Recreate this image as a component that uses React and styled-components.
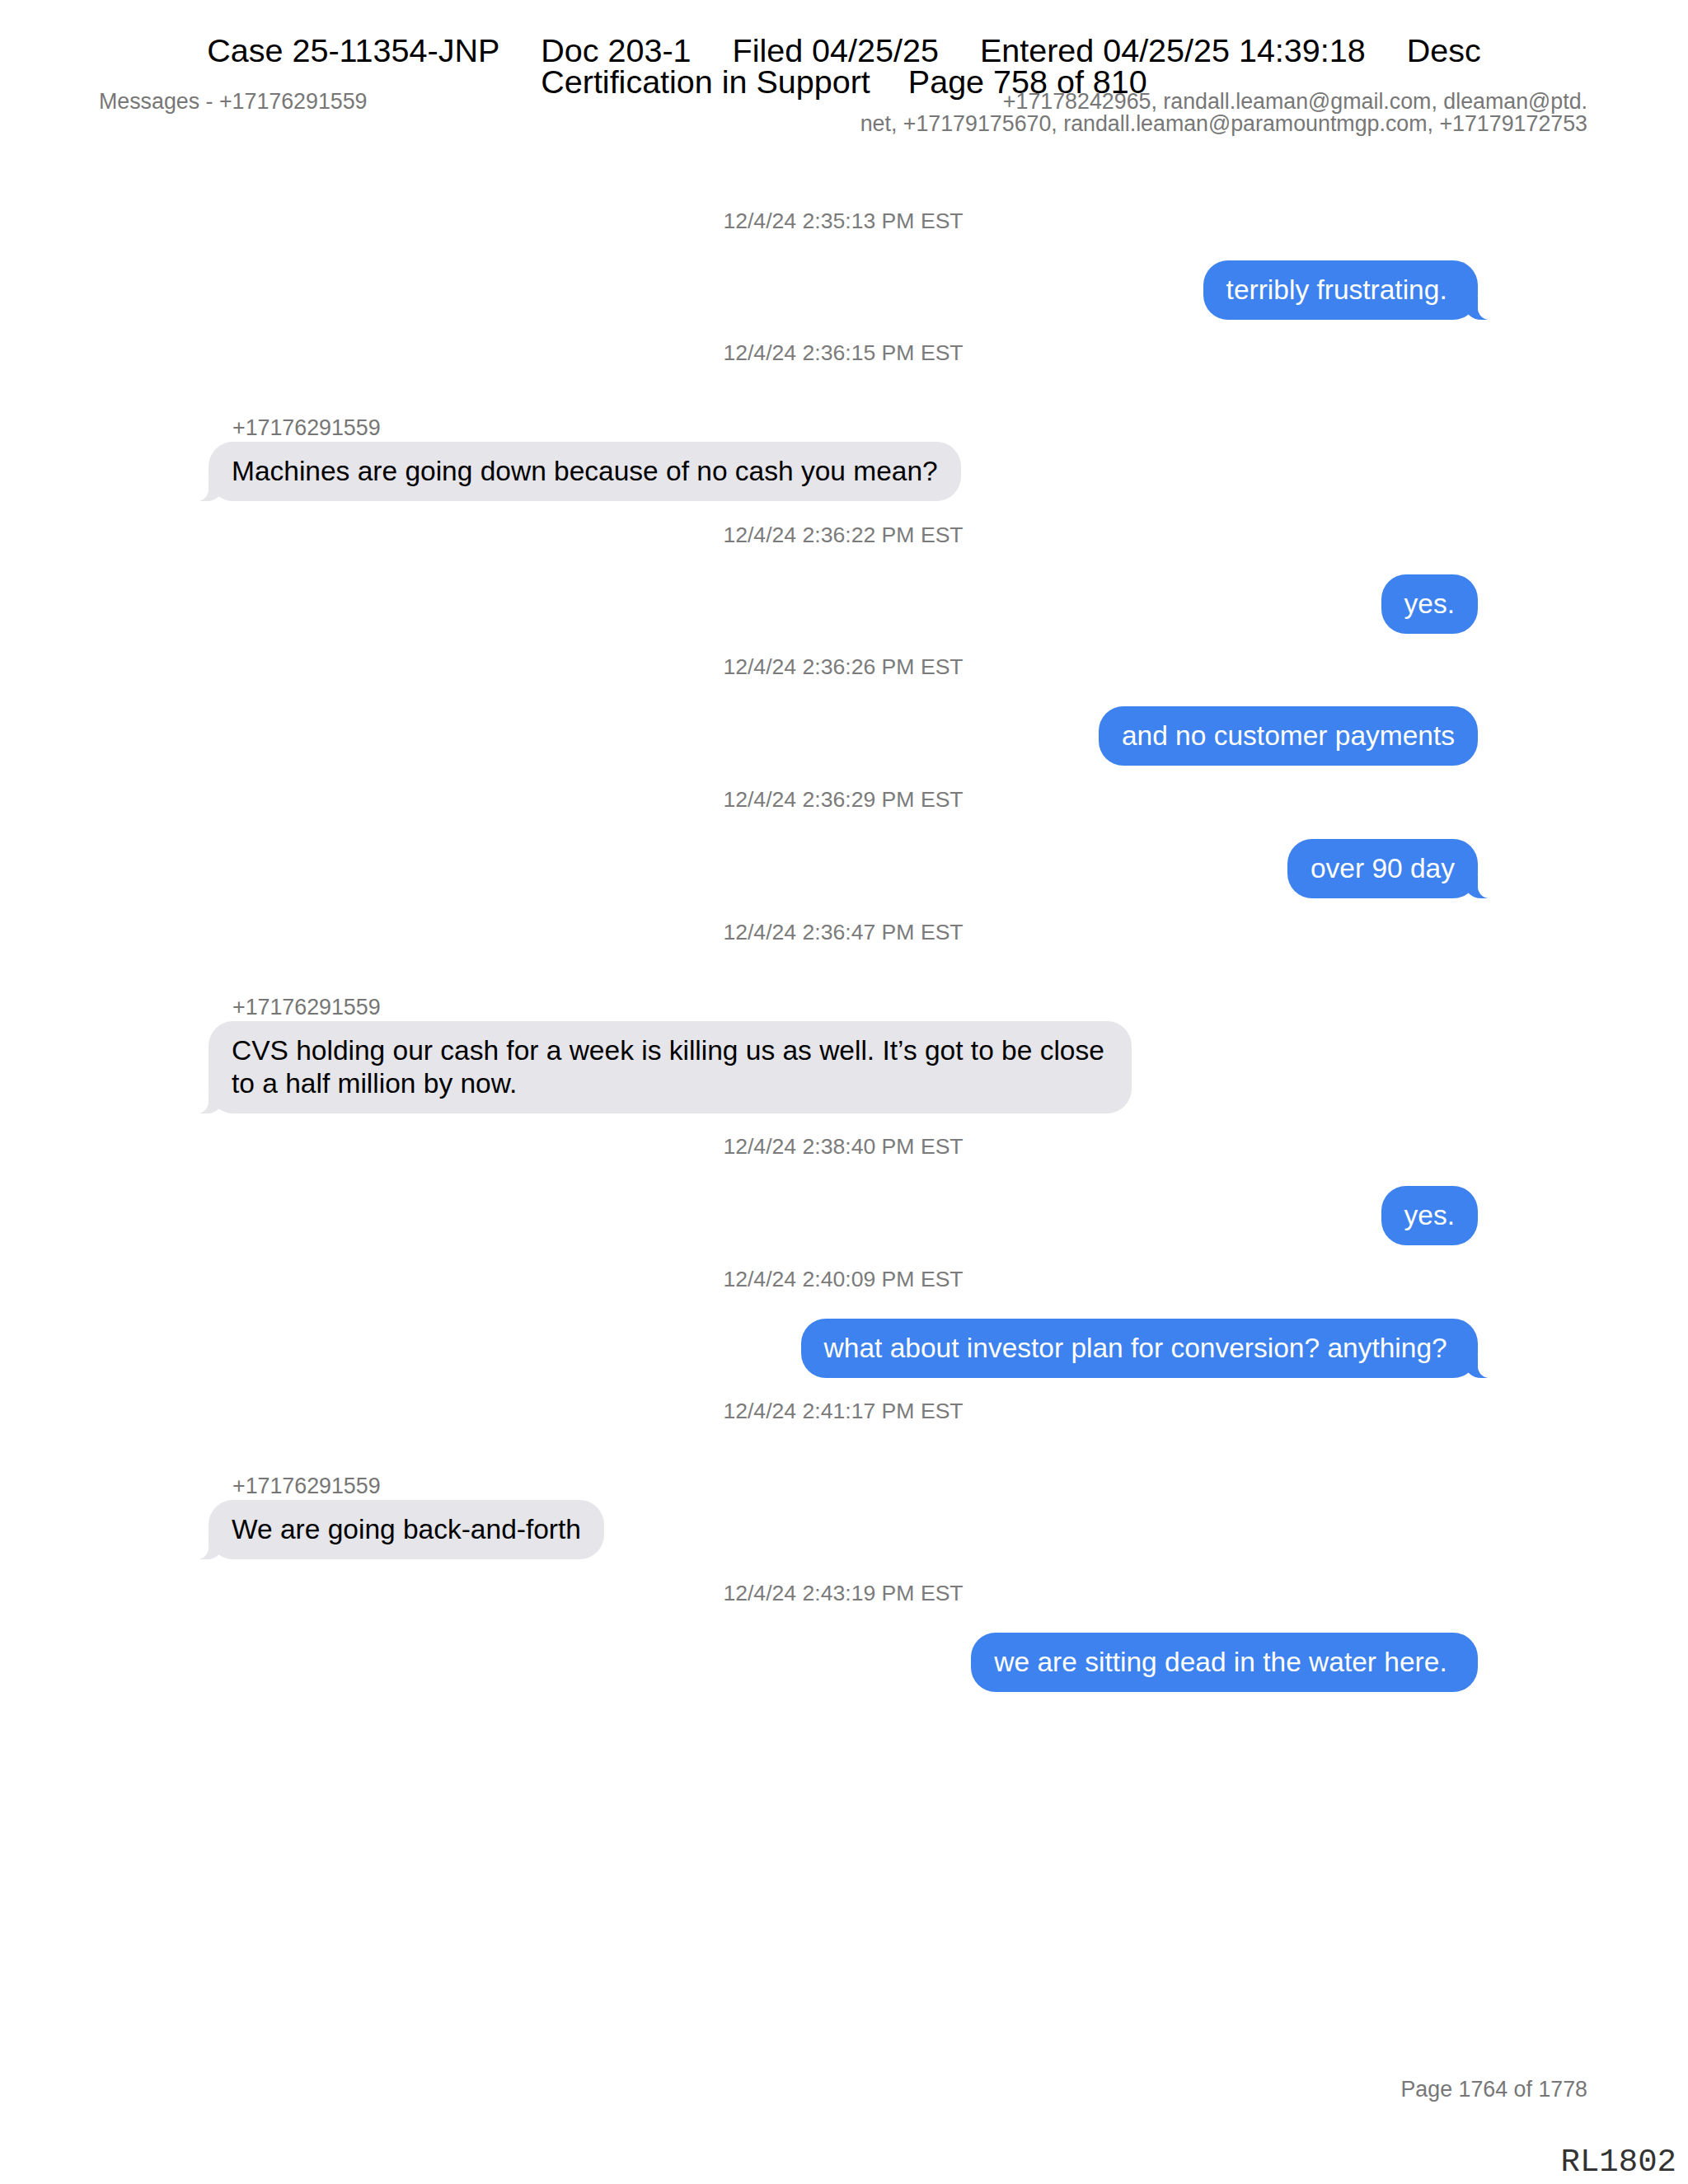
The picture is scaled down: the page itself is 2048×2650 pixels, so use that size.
import React from "react";
import styled, { createGlobalStyle } from "styled-components";

const GlobalStyle = createGlobalStyle`
  html, body {
    margin: 0;
    padding: 0;
    background: #fff;
  }
  * {
    box-sizing: border-box;
  }
`;

const SENDER = "+17176291559";
const NBSP = "\u00a0";

const messages = [
  { time: "12/4/24 2:35:13 PM EST", me: true, text: "terribly frustrating." + NBSP, tail: true },
  {
    time: "12/4/24 2:36:15 PM EST",
    from: SENDER,
    text: "Machines are going down because of no cash you mean?",
    tail: true,
  },
  { time: "12/4/24 2:36:22 PM EST", me: true, text: "yes." },
  { time: "12/4/24 2:36:26 PM EST", me: true, text: "and no customer payments" },
  { time: "12/4/24 2:36:29 PM EST", me: true, text: "over 90 day", tail: true },
  {
    time: "12/4/24 2:36:47 PM EST",
    from: SENDER,
    text: "CVS holding our cash for a week is killing us as well. It\u2019s got to be close to a half million by now.",
    tail: true,
  },
  { time: "12/4/24 2:38:40 PM EST", me: true, text: "yes." },
  {
    time: "12/4/24 2:40:09 PM EST",
    me: true,
    text: "what about investor plan for conversion? anything?" + NBSP,
    tail: true,
  },
  { time: "12/4/24 2:41:17 PM EST", from: SENDER, text: "We are going back-and-forth", tail: true },
  { time: "12/4/24 2:43:19 PM EST", me: true, text: "we are sitting dead in the water here." + NBSP },
];

const Page = styled.div`
  position: relative;
  min-height: 2650px;
  display: flex;
  flex-direction: column;
  padding: 110px 0 4px;
  font-family: "Liberation Sans", Arial, sans-serif;
`;

// court filing stamp printed over the top of the page
const CaseStamp = styled.div`
  position: absolute;
  top: 42px;
  left: 0;
  right: 0;
  display: flex;
  flex-direction: column;
  align-items: center;
  font-family: "Liberation Sans", Arial, sans-serif;
  font-size: 39.5px;
  line-height: 38px;
  color: #000;
`;

const StampLine = styled.div`
  display: flex;
  gap: ${(props) => props.gap}px;
  white-space: nowrap;
`;

const Content = styled.div`
  padding: 0 122px 0 120px;
  display: flex;
  flex-direction: column;
`;

const HeaderRow = styled.div`
  display: flex;
  justify-content: space-between;
  align-items: flex-start;
  font-size: 26.8px;
  line-height: 27px;
  color: #777;
`;

const HeaderRecipients = styled.div`
  text-align: right;
`;

const Chat = styled.div`
  display: flex;
  flex-direction: column;
  padding: 63px 133px 0;
`;

const Item = styled.div`
  display: flex;
  flex-direction: column;
  margin-top: 25.6px;
`;

const Timestamp = styled.div`
  text-align: center;
  font-size: 26.6px;
  line-height: 30px;
  color: #7b7b7b;
  margin-bottom: 33px;
`;

const SenderLabel = styled.div`
  font-size: 26.8px;
  line-height: 30px;
  color: #767676;
  padding-left: 29px;
  margin: 28px 0 2px;
`;

const Bubble = styled.div`
  position: relative;
  align-self: ${(props) => (props.me ? "flex-end" : "flex-start")};
  max-width: 1120px;
  padding: 16px 28px;
  border-radius: 30px;
  font-size: 33.5px;
  line-height: 40px;
  background: ${(props) => (props.me ? "#3d82ee" : "#e5e5ea")};
  color: ${(props) => (props.me ? "#fff" : "#000")};

  ${(props) =>
    props.tail &&
    (props.me
      ? `
    &::before {
      content: "";
      position: absolute;
      bottom: 0;
      right: -12px;
      width: 28px;
      height: 28px;
      background: #3d82ee;
      border-bottom-left-radius: 20px 18px;
    }
    &::after {
      content: "";
      position: absolute;
      bottom: 0;
      right: -36px;
      width: 36px;
      height: 28px;
      background: #fff;
      border-bottom-left-radius: 14px;
    }
  `
      : `
    &::before {
      content: "";
      position: absolute;
      bottom: 0;
      left: -10px;
      width: 28px;
      height: 28px;
      background: #e5e5ea;
      border-bottom-right-radius: 20px 18px;
    }
    &::after {
      content: "";
      position: absolute;
      bottom: 0;
      left: -36px;
      width: 36px;
      height: 28px;
      background: #fff;
      border-bottom-right-radius: 14px;
    }
  `)}
`;

const PageNumber = styled.div`
  margin-top: auto;
  padding-right: 122px;
  text-align: right;
  font-size: 26.8px;
  line-height: 30px;
  color: #777;
`;

const Bates = styled.div`
  margin-top: 52px;
  padding-right: 14px;
  text-align: right;
  font-family: "Liberation Mono", "Courier New", monospace;
  font-size: 39px;
  line-height: 44px;
  color: #333;
`;

const App = () => {
  return (
    <>
      <GlobalStyle />
      <Page>
        <Content>
          <HeaderRow>
            <div>Messages - +17176291559</div>
            <HeaderRecipients>
              <div>+17178242965, randall.leaman@gmail.com, dleaman@ptd.</div>
              <div>net, +17179175670, randall.leaman@paramountmgp.com, +17179172753</div>
            </HeaderRecipients>
          </HeaderRow>

          <Chat>
            {messages.map((m, i) => (
              <Item key={i}>
                <Timestamp>{m.time}</Timestamp>
                {m.from && <SenderLabel>{m.from}</SenderLabel>}
                <Bubble me={m.me} tail={m.tail}>
                  {m.text}
                </Bubble>
              </Item>
            ))}
          </Chat>
        </Content>

        <PageNumber>Page 1764 of 1778</PageNumber>
        <Bates>RL1802</Bates>

        <CaseStamp>
          <StampLine gap={50}>
            <span>Case 25-11354-JNP</span>
            <span>Doc 203-1</span>
            <span>Filed 04/25/25</span>
            <span>Entered 04/25/25 14:39:18</span>
            <span>Desc</span>
          </StampLine>
          <StampLine gap={46}>
            <span>Certification in Support</span>
            <span>Page 758 of 810</span>
          </StampLine>
        </CaseStamp>
      </Page>
    </>
  );
};

export default App;
